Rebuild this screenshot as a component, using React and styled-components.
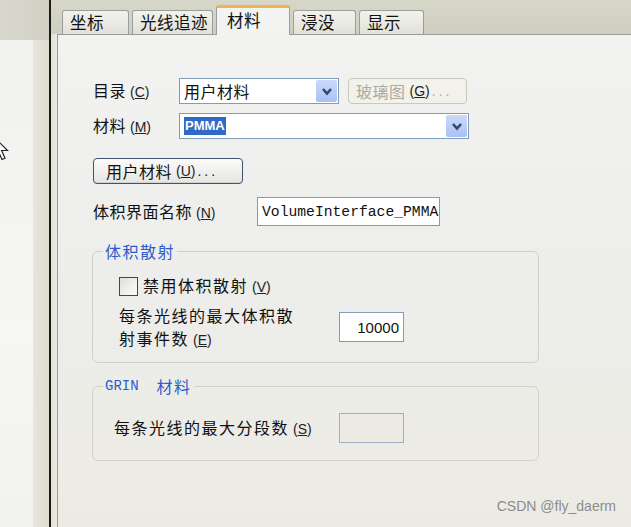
import React from 'react';
import styled, { createGlobalStyle } from 'styled-components';

const GlobalStyle = createGlobalStyle`
  html, body { margin: 0; padding: 0; }
  body {
    width: 631px;
    height: 527px;
    overflow: hidden;
    font-family: "Noto Sans CJK SC", "Noto Sans", sans-serif;
  }
`;

const Window = styled.div`
  position: relative;
  display: flex;
  width: 631px;
  height: 527px;
  overflow: hidden;
  background: #d5d5c9;
`;

const LeftPane = styled.div`
  width: 49px;
  display: flex;
  flex-direction: column;
`;

const LeftTop = styled.div`
  height: 40px;
  background: linear-gradient(to right, #d8d8cd, #d0d0c3);
`;

const LeftBody = styled.div`
  flex: 1;
  display: flex;
`;

const ListArea = styled.div`
  width: 33px;
  background: linear-gradient(to bottom, #f1f1f0, #f6f6f5 60%, #f2f2f0);
`;

const ListEdge = styled.div`
  flex: 1;
  background: linear-gradient(to right, #e6e6dc, #dcdccf);
`;

const Splitter = styled.div`
  width: 2px;
  background: #1c1c14;
`;

const Main = styled.div`
  flex: 1;
  display: flex;
  flex-direction: column;
`;

const TabBar = styled.div`
  height: 34px;
  display: flex;
  align-items: flex-end;
  gap: 3px;
  padding-left: 11px;
  background: linear-gradient(to bottom, #d6d6c9, #cfcfc1);
`;

const Tab = styled.div`
  position: relative;
  box-sizing: border-box;
  width: ${p => p.$w}px;
  height: ${p => (p.$active ? 30 : 24)}px;
  padding-left: ${p => (p.$active ? 10 : 7)}px;
  margin-bottom: ${p => (p.$active ? -1 : 0)}px;
  z-index: ${p => (p.$active ? 2 : 1)};
  border: 1px solid #9a9f9c;
  border-bottom: none;
  border-top: ${p => (p.$active ? '3px solid #f0b451' : '1px solid #9a9f9c')};
  border-radius: 3px 3px 0 0;
  background: ${p =>
    p.$active
      ? '#f3f3f1'
      : 'linear-gradient(to bottom, #f2f2ee, #e2e1d8)'};
  font-size: 16.5px;
  letter-spacing: 0.5px;
  line-height: ${p => (p.$active ? 24 : 22)}px;
  color: #111;
  white-space: nowrap;
`;

const Body = styled.div`
  flex: 1;
  display: flex;
`;

const Gutter = styled.div`
  width: 6px;
  background: linear-gradient(to right, #e2e2d8, #ebebe3);
`;

const Panel = styled.div`
  flex: 1;
  border-top: 1px solid #979c9a;
  border-left: 1px solid #979c9a;
  background: linear-gradient(to bottom, #f2f2f0, #ededeb 50%, #ecebe3);
  padding: 43px 0 0 35px;
`;

const Row = styled.div`
  display: flex;
  align-items: center;
  margin-top: ${p => p.$mt || 0}px;
`;

const Label = styled.div`
  width: ${p => (p.$w ? `${p.$w}px` : 'auto')};
  flex-shrink: 0;
  font-size: 16px;
  letter-spacing: ${p => p.$ls || 0.5}px;
  line-height: 20px;
  color: #111;
  white-space: nowrap;
`;

const Line = styled.div`
  height: 23px;
  line-height: 23px;
`;

const Key = styled.span`
  font-family: "Liberation Sans", sans-serif;
  font-size: 14px;
  letter-spacing: 0;
  margin-left: 4px;
  color: #222;
`;

const Select = styled.div`
  box-sizing: border-box;
  width: ${p => p.$w}px;
  height: 26px;
  display: flex;
  align-items: center;
  border: 1px solid #7f9db9;
  background: #fff;
  padding: 0 1px 0 4px;
  font-size: 16px;
  letter-spacing: 0.5px;
  color: #111;
`;

const Picked = styled.span`
  background: #316ac5;
  color: #fff;
  font-family: "Liberation Sans", sans-serif;
  font-weight: bold;
  font-size: 13px;
  line-height: 18px;
  letter-spacing: 0;
  padding: 0 1px;
`;

const Arrow = styled.span`
  margin-left: auto;
  width: 21px;
  height: 22px;
  border-radius: 2px;
  background: linear-gradient(to bottom, #cbdafc, #a9c1f2);
  display: flex;
  align-items: center;
  justify-content: center;
`;

const Button = styled.div`
  box-sizing: border-box;
  width: ${p => p.$w}px;
  height: 26px;
  margin-left: ${p => p.$ml || 0}px;
  padding-left: ${p => p.$pl || 12}px;
  display: flex;
  align-items: center;
  border: 1px solid ${p => (p.$disabled ? '#cbc9bd' : '#3d5470')};
  border-radius: 4px;
  background: ${p =>
    p.$disabled ? '#f2f1ea' : 'linear-gradient(to bottom, #fbfbfa, #e6e5de)'};
  box-shadow: ${p => (p.$disabled ? 'none' : 'inset 0 -1px 0 #cfd2d8')};
  font-size: 16px;
  letter-spacing: 0.5px;
  color: ${p => (p.$disabled ? '#adab9f' : '#111')};
  white-space: nowrap;
`;

const Dots = styled.span`
  font-family: "Liberation Sans", sans-serif;
  font-size: 14px;
  letter-spacing: 3px;
  margin-left: 2px;
`;

const Input = styled.div`
  box-sizing: border-box;
  width: ${p => p.$w}px;
  height: ${p => p.$h}px;
  display: flex;
  align-items: center;
  justify-content: ${p => (p.$right ? 'flex-end' : 'flex-start')};
  padding: 0 4px;
  border: 1px solid ${p => (p.$disabled ? '#9fb0c4' : '#7f9db9')};
  background: ${p => (p.$disabled ? '#eceae2' : '#fff')};
  color: #111;
`;

const MonoText = styled.span`
  font-family: "Liberation Mono", monospace;
  font-size: 14.7px;
`;

const NumText = styled.span`
  font-family: "Liberation Sans", sans-serif;
  font-size: 15px;
`;

const Group = styled.fieldset`
  box-sizing: border-box;
  width: 447px;
  margin: ${p => p.$mt}px 0 0 -1px;
  padding: ${p => p.$pt}px 0 ${p => p.$pb}px 10px;
  border: 1px solid #d2d1c6;
  border-radius: 6px;
`;

const Legend = styled.legend`
  display: flex;
  align-items: center;
  height: 20px;
  padding: 0 2px;
  font-size: 16px;
  letter-spacing: 1.5px;
  line-height: 20px;
  color: #2e5ccf;
`;

const LegendMono = styled.span`
  font-family: "Liberation Mono", monospace;
  font-size: 14px;
  letter-spacing: 0;
  line-height: 20px;
  margin-right: 18px;
`;

const GroupBody = styled.div`
  padding-left: ${p => p.$pl}px;
`;

const Check = styled.span`
  box-sizing: border-box;
  width: 19px;
  height: 19px;
  margin-right: 5px;
  border: 1px solid #37475f;
  background: linear-gradient(135deg, #e0e0da, #fbfbf9);
`;

const Cursor = styled.svg`
  position: absolute;
  left: -7px;
  top: 136px;
`;

const Watermark = styled.div`
  position: absolute;
  right: 15px;
  bottom: 13px;
  font-family: "Liberation Sans", sans-serif;
  font-size: 14px;
  color: #8c8c8c;
`;

const Chevron = () => (
  <svg width="12" height="9" viewBox="0 0 12 9">
    <path d="M2 2 L6 6.5 L10 2" fill="none" stroke="#34496f" strokeWidth="2.6" />
  </svg>
);

const tabs = [
  { label: '坐标', w: 67 },
  { label: '光线追迹', w: 81 },
  { label: '材料', w: 74, active: true },
  { label: '浸没', w: 63 },
  { label: '显示', w: 65 },
];

export default function App() {
  return (
    <>
      <GlobalStyle />
      <Window>
        <LeftPane>
          <LeftTop />
          <LeftBody>
            <ListArea />
            <ListEdge />
          </LeftBody>
        </LeftPane>
        <Splitter />
        <Main>
          <TabBar>
            {tabs.map(t => (
              <Tab key={t.label} $w={t.w} $active={t.active}>
                {t.label}
              </Tab>
            ))}
          </TabBar>
          <Body>
            <Gutter />
            <Panel>
              <Row>
                <Label $w={86}>
                  目录<Key>(<u>C</u>)</Key>
                </Label>
                <Select $w={160}>
                  用户材料
                  <Arrow><Chevron /></Arrow>
                </Select>
                <Button $w={119} $ml={9} $pl={7} $disabled>
                  玻璃图<Key>(<u>G</u>)</Key>
                  <Dots>...</Dots>
                </Button>
              </Row>
              <Row $mt={9}>
                <Label $w={86}>
                  材料<Key>(<u>M</u>)</Key>
                </Label>
                <Select $w={290}>
                  <Picked>PMMA</Picked>
                  <Arrow><Chevron /></Arrow>
                </Select>
              </Row>
              <Row $mt={19}>
                <Button $w={150}>
                  用户材料<Key>(<u>U</u>)</Key>
                  <Dots>...</Dots>
                </Button>
              </Row>
              <Row $mt={13}>
                <Label $w={164}>
                  体积界面名称<Key>(<u>N</u>)</Key>
                </Label>
                <Input $w={183} $h={29}>
                  <MonoText>VolumeInterface_PMMA</MonoText>
                </Input>
              </Row>
              <Group $mt={15} $pt={14} $pb={12}>
                <Legend>体积散射</Legend>
                <GroupBody $pl={16}>
                  <Row>
                    <Check />
                    <Label $ls={1.5}>
                      禁用体积散射<Key>(<u>V</u>)</Key>
                    </Label>
                  </Row>
                  <Row $mt={7}>
                    <Label $w={220} $ls={1.5}>
                      <Line>每条光线的最大体积散</Line>
                      <Line>射事件数<Key>(<u>E</u>)</Key></Line>
                    </Label>
                    <Input $w={65} $h={30} $right>
                      <NumText>10000</NumText>
                    </Input>
                  </Row>
                </GroupBody>
              </Group>
              <Group $mt={13} $pt={17} $pb={17}>
                <Legend>
                  <LegendMono>GRIN</LegendMono>材料
                </Legend>
                <GroupBody $pl={11}>
                  <Row>
                    <Label $w={225} $ls={1.5}>
                      每条光线的最大分段数<Key>(<u>S</u>)</Key>
                    </Label>
                    <Input $w={65} $h={30} $disabled />
                  </Row>
                </GroupBody>
              </Group>
            </Panel>
          </Body>
        </Main>
        <Cursor width="16" height="26" viewBox="0 0 16 26">
          <path
            d="M1 1 L1 20 L5.5 15.5 L9 23.5 L12 22.2 L8.6 14.5 L14.5 14.5 Z"
            fill="#fff"
            stroke="#222"
            strokeWidth="1.2"
          />
        </Cursor>
        <Watermark>CSDN @fly_daerm</Watermark>
      </Window>
    </>
  );
}
